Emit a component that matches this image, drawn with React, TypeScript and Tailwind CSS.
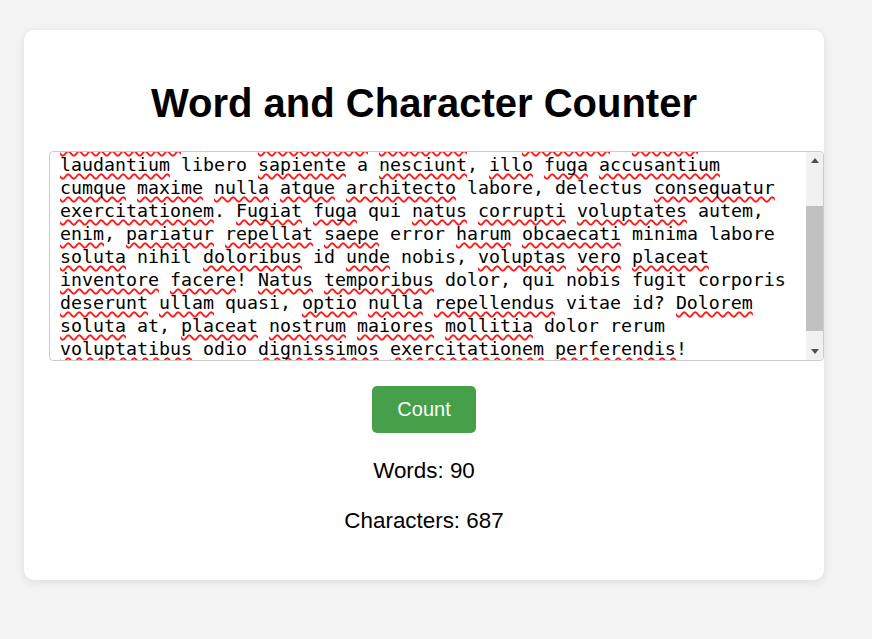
import { useEffect, useRef, useState } from "react";

const TEXT =
  "Lorem ipsum dolor sit amet consectetur adipisicing elit. Ut consectetur quasi asperiores eligendi qui officiis. Beatae neque laudantium libero sapiente a nesciunt, illo fuga accusantium cumque maxime nulla atque architecto labore, delectus consequatur exercitationem. Fugiat fuga qui natus corrupti voluptates autem, enim, pariatur repellat saepe error harum obcaecati minima labore soluta nihil doloribus id unde nobis, voluptas vero placeat inventore facere! Natus temporibus dolor, qui nobis fugit corporis deserunt ullam quasi, optio nulla repellendus vitae id? Dolorem soluta at, placeat nostrum maiores mollitia dolor rerum voluptatibus odio dignissimos exercitationem perferendis!";

// words the spell checker flags
const FLAGGED = new Set([
  "lorem", "ipsum", "adipisicing", "consectetur", "asperiores", "eligendi", "officiis", "beatae",
  "laudantium", "sapiente", "nesciunt", "illo", "fuga", "accusantium", "cumque", "maxime", "nulla",
  "atque", "architecto", "consequatur", "exercitationem", "fugiat", "natus", "corrupti", "voluptates",
  "enim", "pariatur", "repellat", "saepe", "harum", "obcaecati", "soluta", "doloribus", "unde",
  "voluptas", "vero", "placeat", "inventore", "facere", "temporibus", "deserunt", "ullam", "optio",
  "repellendus", "dolorem", "nostrum", "maiores", "mollitia", "voluptatibus", "dignissimos", "perferendis",
]);

function countText(text: string) {
  const trimmed = text.trim();
  return {
    words: trimmed ? trimmed.split(/\s+/).length : 0,
    chars: text.length,
  };
}

function SpellText({ text }: { text: string }) {
  return (
    <>
      {text.split(/(\s+)/).map((tok, i) => {
        const m = tok.match(/^([A-Za-z]+)(.*)$/);
        if (!m || !FLAGGED.has(m[1].toLowerCase())) return <span key={i}>{tok}</span>;
        return (
          <span key={i}>
            <span className="underline decoration-wavy decoration-[#ff1a1a] decoration-[1.5px] underline-offset-[2px] [text-decoration-skip-ink:none]">
              {m[1]}
            </span>
            {m[2]}
          </span>
        );
      })}
    </>
  );
}

function Arrow({ up }: { up?: boolean }) {
  return (
    <div className="h-[17px] flex items-center justify-center">
      <svg width="8" height="5" viewBox="0 0 8 5">
        <path d={up ? "M0 5 L4 0 L8 5 Z" : "M0 0 L4 5 L8 0 Z"} fill="#505050" />
      </svg>
    </div>
  );
}

export default function App() {
  const boxRef = useRef<HTMLDivElement>(null);
  const [counts, setCounts] = useState(() => countText(TEXT));

  useEffect(() => {
    if (boxRef.current) boxRef.current.scrollTop = 55;
  }, []);

  return (
    <div className="min-h-[639px] bg-[#f4f4f4] pt-[30px] pl-[24px] font-['Liberation_Sans',Arial,sans-serif] text-black">
      <div className="w-[800px] rounded-[10px] bg-white px-[25px] pt-[50px] pb-[47px] shadow-[0_2px_10px_rgba(0,0,0,0.1)] flex flex-col items-center">
        <h1 className="text-[40px] leading-[46px] font-bold">Word and Character Counter</h1>

        {/* textarea with its scrollbar */}
        <div className="mt-[25px] self-start w-[775px] h-[210px] flex overflow-hidden rounded-[4px] border border-[#cccccc] bg-white">
          <div
            ref={boxRef}
            className="flex-1 overflow-hidden p-[10px] font-['DejaVu_Sans_Mono',monospace] text-[18.27px] leading-[23px]"
          >
            <div className="w-[736px] break-words">
              <SpellText text={TEXT} />
            </div>
          </div>
          <div className="w-[17px] flex flex-col bg-[#f1f1f1]">
            <Arrow up />
            <div className="flex-1">
              <div className="mt-[37px] h-[125px] bg-[#c1c1c1]" />
            </div>
            <Arrow />
          </div>
        </div>

        <button
          onClick={() => setCounts(countText(TEXT))}
          className="mt-[25px] rounded-[5px] bg-[#45a049] px-[25px] py-[12px] text-[20px] leading-[23px] text-white"
        >
          Count
        </button>

        <p className="mt-[25px] text-[22.4px] leading-[25.7px]">Words: {counts.words}</p>
        <p className="mt-[24px] text-[22.4px] leading-[25.7px]">Characters: {counts.chars}</p>
      </div>
    </div>
  );
}
